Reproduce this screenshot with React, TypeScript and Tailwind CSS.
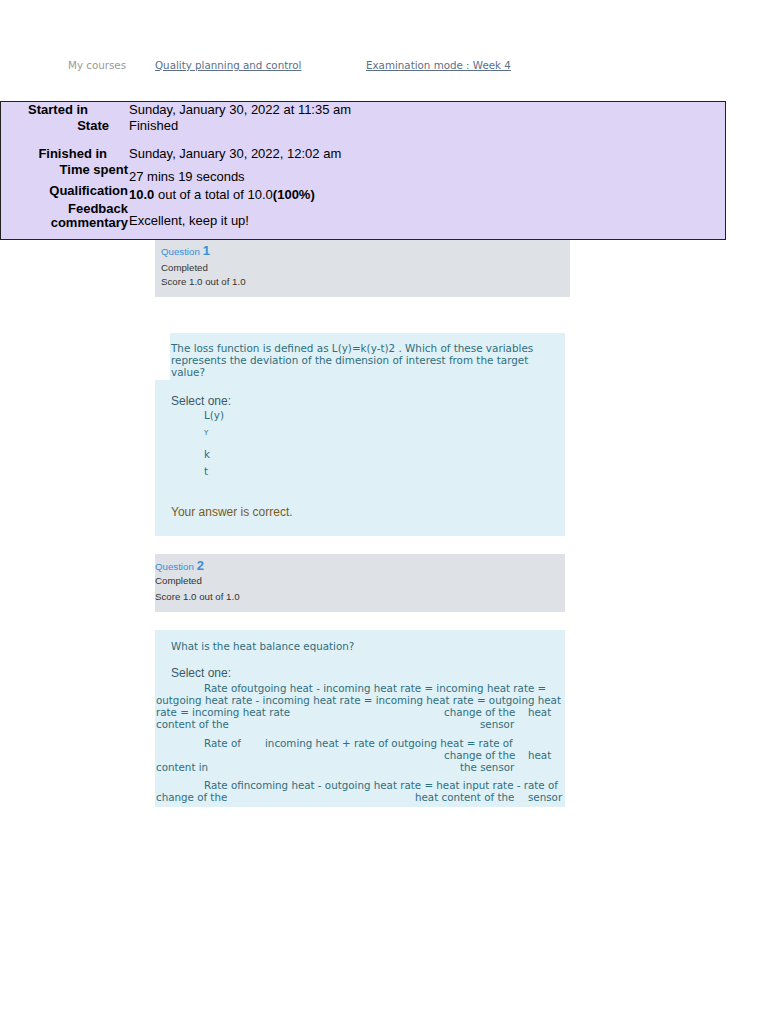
const verdana = "font-['DejaVu_Sans',Verdana,sans-serif]";
const arial = "font-['Liberation_Sans',Arial,sans-serif]";

const Row = ({ children, className = '' }: { children: React.ReactNode; className?: string }) => (
  <div className={`flex h-[12px] items-center whitespace-nowrap ${className}`}>{children}</div>
);

export default function App() {
  return (
    <div className="min-h-screen bg-white pb-10 text-black">
      {/* breadcrumb */}
      <nav className={`flex h-[101px] items-center pl-[68px] pt-[30px] text-[10.3px] ${verdana}`}>
        <span className="w-[87px] text-[#9a9a9a]">My courses</span>
        <a className="w-[211px] text-[#5b6f88] underline">Quality planning and control</a>
        <a className="text-[#5b6f88] underline">Examination mode : Week 4</a>
      </nav>

      {/* summary */}
      <div className={`w-[726px] border border-[#222] bg-[#ddd4f6] text-[13px] ${arial}`}>
        <div className="flex h-[16px] items-center">
          <div className="w-[128px] pr-[41px] text-right font-bold">Started in</div>
          <div>Sunday, January 30, 2022 at 11:35 am</div>
        </div>
        <div className="flex h-[16px] items-center">
          <div className="w-[128px] pr-[20px] text-right font-bold">State</div>
          <div>Finished</div>
        </div>
        <div className="mt-[12px] flex h-[16px] items-center">
          <div className="w-[128px] pr-[22px] text-right font-bold">Finished in</div>
          <div>Sunday, January 30, 2022, 12:02 am</div>
        </div>
        <div className="flex h-[21px] items-start leading-[15px]">
          <div className="w-[128px] pr-px text-right font-bold">Time spent</div>
          <div className="pt-[7px]">27 mins 19 seconds</div>
        </div>
        <div className="flex h-[18px] items-start leading-[15px]">
          <div className="w-[128px] pr-px text-right font-bold">Qualification</div>
          <div className="pt-[4px]">
            <b>10.0</b> out of a total of 10.0<b>(100%)</b>
          </div>
        </div>
        <div className="flex h-[38px] items-start pt-px leading-[14px]">
          <div className="w-[128px] pr-px text-right font-bold">
            Feedback
            <br />
            commentary
          </div>
          <div className="pt-[12px]">Excellent, keep it up!</div>
        </div>
      </div>

      {/* question 1 */}
      <div className={`ml-[155px] h-[57px] w-[415px] bg-[#dee1e6] pl-[6px] pt-[4px] ${arial} text-[9.7px] text-[#333]`}>
        <div className="flex h-[14px] items-end text-[#3a8ed6]">
          <span className="leading-[13px]">Question</span>
          <span className="ml-[3px] text-[13px] font-semibold leading-[15px]">1</span>
        </div>
        <div className="mt-[4px] leading-[12px]">Completed</div>
        <div className="mt-[2px] leading-[12px]">Score 1.0 out of 1.0</div>
      </div>

      <div className={`ml-[170px] mt-[36px] w-[395px] bg-[#dff0f7] pb-[2px] pl-px pt-[9px] text-[10.4px] leading-[12px] text-[#2f6e7c] ${verdana}`}>
        The loss function is defined as L(y)=k(y-t)2 . Which of these variables
        <br />
        represents the deviation of the dimension of interest from the target
        <br />
        value?
      </div>
      <div className="ml-[155px] h-[156px] w-[410px] bg-[#dff0f7] pl-[16px] pt-[14px]">
        <div className={`h-[14px] text-[12px] leading-[14px] text-[#3d5965] ${arial}`}>Select one:</div>
        <div className={`pl-[33px] text-[#2f6e7c] ${verdana}`}>
          <div className="mt-px h-[13px] text-[10.4px] leading-[13px]">L(y)</div>
          <div className="mt-[6px] h-[10px] text-[7px] leading-[10px]">Y</div>
          <div className="mt-[10px] h-[13px] text-[10.4px] leading-[13px]">k</div>
          <div className="mt-[4px] h-[13px] text-[10.4px] leading-[13px]">t</div>
        </div>
        <div className={`mt-[27px] text-[12px] leading-[14px] text-[#7b5a1e] ${arial}`}>Your answer is correct.</div>
      </div>

      {/* question 2 */}
      <div className={`ml-[155px] mt-[18px] h-[58px] w-[410px] bg-[#dee1e6] pt-[5px] ${arial} text-[9.7px] text-[#333]`}>
        <div className="flex h-[14px] items-end text-[#3a8ed6]">
          <span className="leading-[13px]">Question</span>
          <span className="ml-[3px] text-[13px] font-semibold leading-[15px]">2</span>
        </div>
        <div className="mt-[2px] leading-[12px]">Completed</div>
        <div className="mt-[4px] leading-[12px]">Score 1.0 out of 1.0</div>
      </div>

      <div className={`ml-[155px] mt-[18px] h-[177px] w-[410px] bg-[#dff0f7] pt-[10px] text-[10.3px] text-[#2f6e7c] ${verdana}`}>
        <div className="h-[12px] pl-[16px] leading-[12px]">What is the heat balance equation?</div>
        <div className={`mt-[14px] h-[14px] pl-[16px] text-[12px] leading-[14px] text-[#3d5965] ${arial}`}>Select one:</div>
        <div className="mt-[3px]">
          <Row className="pl-[49px]">Rate ofoutgoing heat - incoming heat rate = incoming heat rate =</Row>
          <Row className="pl-px">outgoing heat rate - incoming heat rate = incoming heat rate = outgoing heat</Row>
          <Row className="pl-px">
            <span className="w-[288px] shrink-0">rate = incoming heat rate</span>
            <span className="w-[84px] shrink-0">change of the</span>
            <span>heat</span>
          </Row>
          <Row className="pl-px">
            <span className="w-[324px] shrink-0">content of the</span>
            <span>sensor</span>
          </Row>

          <Row className="mt-[7px] pl-[49px]">
            <span className="w-[61px] shrink-0">Rate of</span>
            <span>incoming heat + rate of outgoing heat = rate of</span>
          </Row>
          <Row className="pl-[289px]">
            <span className="w-[84px] shrink-0">change of the</span>
            <span>heat</span>
          </Row>
          <Row className="pl-px">
            <span className="w-[304px] shrink-0">content in</span>
            <span>the sensor</span>
          </Row>

          <Row className="mt-[6px] pl-[49px]">Rate ofincoming heat - outgoing heat rate = heat input rate - rate of</Row>
          <Row className="pl-px">
            <span className="w-[259px] shrink-0">change of the</span>
            <span className="w-[113px] shrink-0">heat content of the</span>
            <span>sensor</span>
          </Row>
        </div>
      </div>
    </div>
  );
}
